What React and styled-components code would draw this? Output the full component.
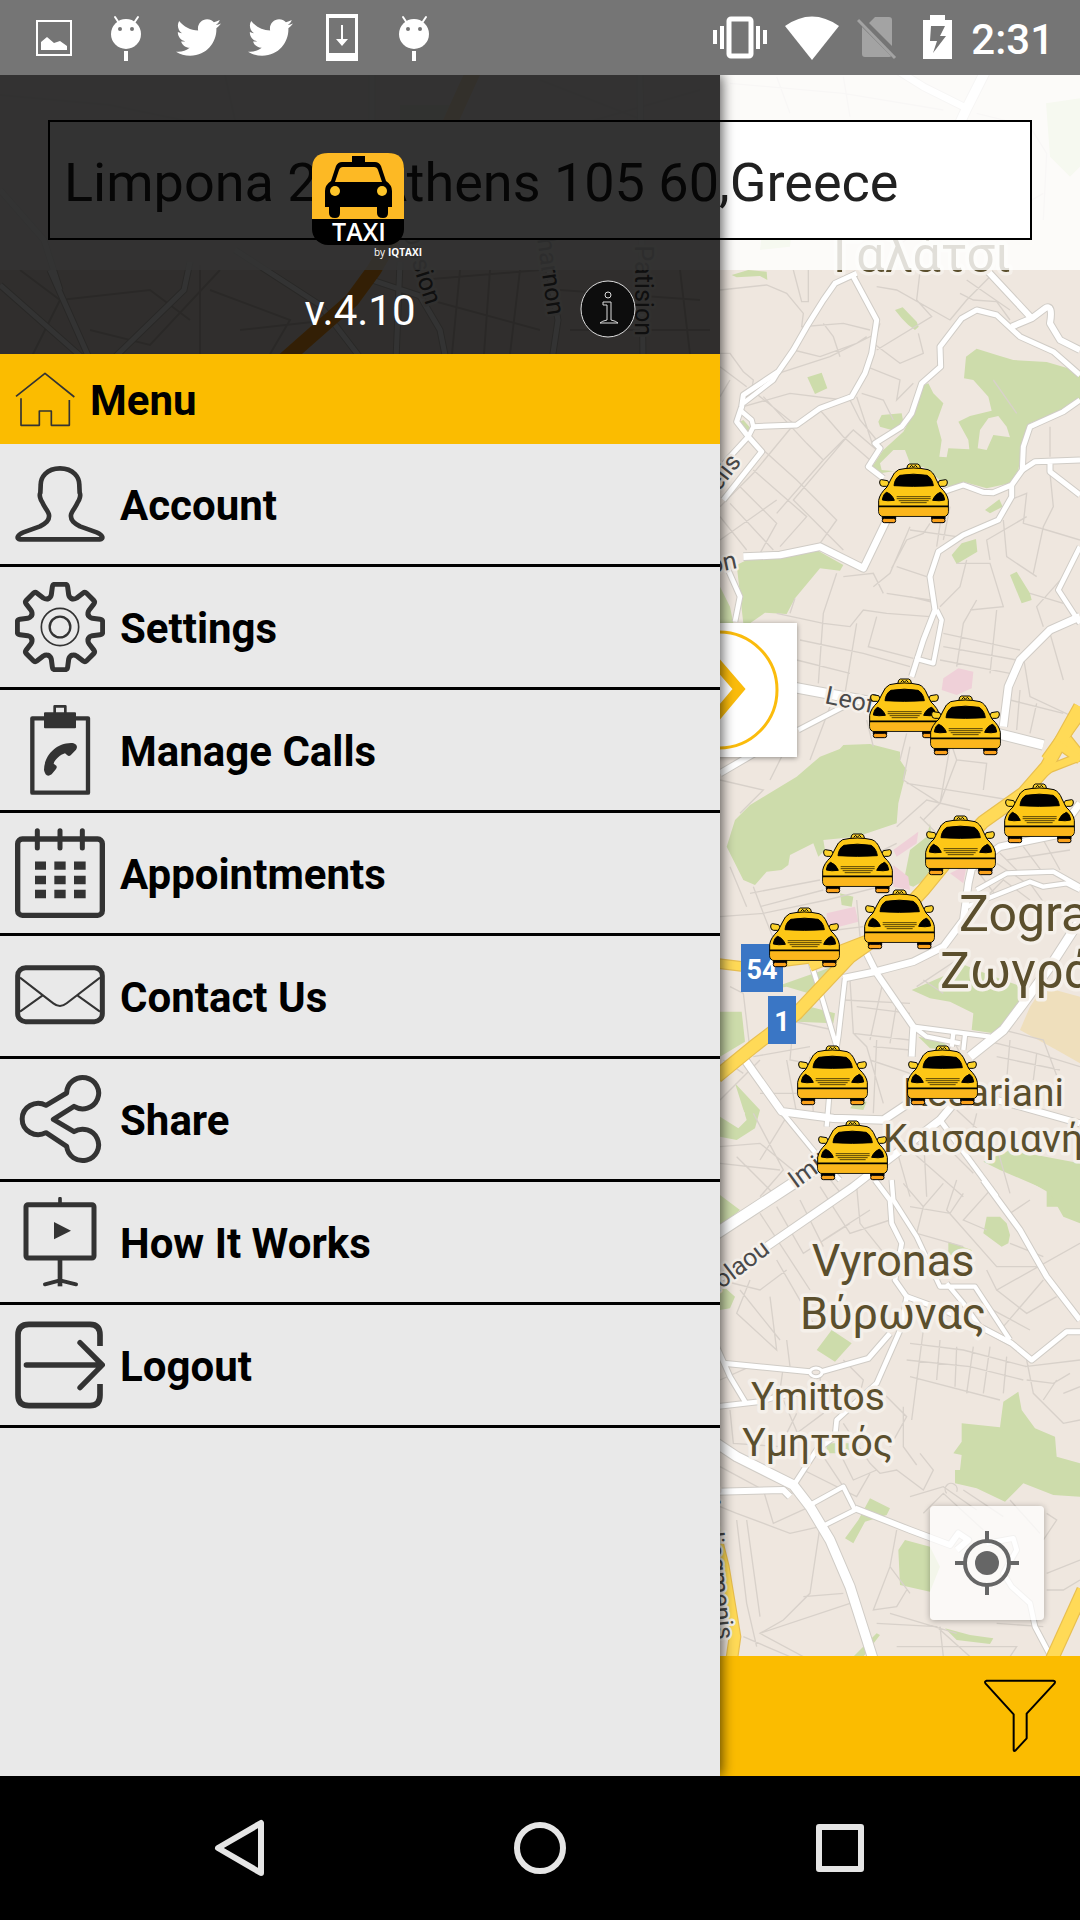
import { useState } from 'react';
import styled, { createGlobalStyle } from 'styled-components';
import { FaTwitter } from 'react-icons/fa';

const GlobalStyle = createGlobalStyle`
    * {
        box-sizing: border-box;
    }

    body {
        margin: 0;
        background: #000;
        font-family: Roboto, "Liberation Sans", sans-serif;
    }
`;

const Screen = styled.div`
    min-height: 100vh;
    display: flex;
    flex-direction: column;
`;

const StatusBar = styled.header`
    height: 75px;
    display: flex;
    align-items: center;
    justify-content: space-between;
    padding: 0 26px 0 18px;
    background: #757575;
    color: white;
`;

const Notifications = styled.div`
    display: flex;
    align-items: center;
`;

const Slot = styled.span`
    width: 72px;
    height: 75px;
    display: flex;
    align-items: center;
    justify-content: center;
`;

const SystemIcons = styled.div`
    display: flex;
    align-items: center;
    gap: 18px;
`;

const Clock = styled.time`
    font-size: 42px;
    font-weight: 500;
    line-height: 48px;
    padding-top: 4px;
`;

/* The drawer takes two thirds of the row, the map runs under all of it */
const Main = styled.main`
    flex: 1;
    display: grid;
    grid-template-columns: 2fr 1fr;
    overflow: hidden;
`;

const MapScreen = styled.section`
    grid-area: 1 / 1 / 2 / 3;
    display: flex;
    flex-direction: column;
`;

const MapArea = styled.div`
    position: relative;
    flex: 1;
    display: flex;
    flex-direction: column;
    justify-content: space-between;
    background: #efe7df;
`;

const MapDrawing = styled.svg`
    position: absolute;
    inset: 0;
    width: 100%;
    height: 100%;
`;

const SearchPanel = styled.div`
    position: relative;
    padding: 45px 48px 30px;
    background: rgba(255, 255, 255, 0.82);
`;

const AddressInput = styled.input`
    display: block;
    width: 100%;
    height: 120px;
    padding: 4px 14px 0;
    border: 2px solid black;
    border-radius: 0;
    background: white;
    color: #212121;
    font-family: inherit;
    font-size: 54px;
    outline: none;
`;

const LocateButton = styled.button`
    position: relative;
    align-self: flex-end;
    width: 114px;
    height: 114px;
    margin: 36px;
    padding: 0;
    border: none;
    border-radius: 4px;
    background: rgba(255, 255, 255, 0.75);
    box-shadow: 0 1px 6px rgba(0, 0, 0, 0.3);
`;

const BottomBar = styled.footer`
    height: 120px;
    display: flex;
    align-items: center;
    justify-content: flex-end;
    padding: 0 24px;
    background: #fbbc00;
`;

const IconButton = styled.button`
    display: flex;
    padding: 0;
    border: none;
    background: none;
`;

const ExpandButton = styled.button`
    grid-area: 1 / 1;
    justify-self: end;
    z-index: 1;
    width: 156px;
    height: 134px;
    margin: 548px -77px 0 0;
    padding: 0;
    border: none;
    background: white;
    box-shadow: 0 1px 5px rgba(0, 0, 0, 0.4);
`;

const Drawer = styled.aside`
    grid-area: 1 / 1;
    z-index: 2;
    display: flex;
    flex-direction: column;
    box-shadow: 2px 0 12px rgba(0, 0, 0, 0.65);
`;

const DrawerHeader = styled.div`
    min-height: 279px;
    display: flex;
    flex-direction: column;
    align-items: center;
    padding-top: 78px;
    background: rgba(0, 0, 0, 0.8);
`;

const VersionRow = styled.div`
    flex: 1;
    width: 100%;
    display: grid;
    grid-template-columns: 1fr auto 1fr;
    align-items: center;
    padding-top: 2px;
`;

const Version = styled.span`
    grid-column: 2;
    padding-top: 4px;
    color: white;
    font-size: 42px;
    line-height: 48px;
`;

const InfoButton = styled(IconButton)`
    justify-self: end;
    margin-right: 84px;
`;

const MenuTitle = styled.h1`
    height: 90px;
    display: flex;
    align-items: center;
    gap: 15px;
    margin: 0;
    padding: 0 15px;
    background: #fbbc00;
    color: black;
    font-size: 42px;
    font-weight: 700;
`;

const MenuList = styled.ul`
    flex: 1;
    margin: 0;
    padding: 0;
    list-style: none;
    background: #e9e9e9;
`;

const MenuLink = styled.a`
    height: 123px;
    display: flex;
    align-items: center;
    gap: 15px;
    padding: 0 15px;
    border-bottom: 3px solid black;
    color: black;
    font-size: 42px;
    font-weight: 700;
    text-decoration: none;
`;

const MenuLabel = styled.span`
    padding-top: 2px;
`;

const LineIcon = styled.svg`
    flex: none;
    width: ${({ $size }) => $size}px;
    height: ${({ $size }) => $size}px;
    fill: none;
    stroke: #333;
    stroke-linejoin: round;
`;

const NavBar = styled.nav`
    height: 144px;
    display: grid;
    grid-template-columns: repeat(3, 1fr);
    justify-items: center;
    align-items: center;
    padding: 0 90px;
    background: black;
`;

const PlaceLabel = styled.text`
    font-size: ${({ $size }) => $size}px;
    text-anchor: ${({ $anchor }) => $anchor || 'start'};
    fill: #5b4f2d;
    stroke: #f5f0ea;
    stroke-width: 7px;
    stroke-linejoin: round;
    paint-order: stroke;
`;

const RoadLabel = styled.text`
    font-size: 25px;
    text-anchor: ${({ $anchor }) => $anchor || 'start'};
    fill: #4a4a4a;
    stroke: #f5f0ea;
    stroke-width: 5px;
    stroke-linejoin: round;
    paint-order: stroke;
`;

const ShieldText = styled.text`
    font-size: 27px;
    font-weight: 700;
    text-anchor: middle;
    fill: white;
`;

const LogoText = styled.text`
    font-family: "Open Sans", "Noto Sans", sans-serif;
    font-size: ${({ $size }) => $size}px;
    font-weight: ${({ $weight }) => $weight || 400};
    fill: white;
`;

/* ---------- map data ---------- */

// Each tile is drawn at three units per pixel, from its own top left corner
const tiles = [
    {
        x: 710,
        y: 240,
        parks: [
            'M768 350 L800 326 L860 345 L910 360 L1010 366 L1110 395 V480 L1060 510 L960 550 L940 600 L925 690 L900 730 L830 745 L760 725 L720 745 L640 680 L510 700 L480 690 L520 630 L580 575 L610 520 L630 440 L655 430 L670 460 L700 490 L680 545 L695 600 L688 650 L710 652 L715 625 L778 628 L775 600 L745 545 L780 528 L845 512 L835 470 L790 420 L762 415Z',
            'M505 545 L515 525 L575 520 L580 545 L545 570 L510 560Z',
            'M555 210 L578 202 L620 245 L626 260 L615 270 L595 255 L575 235Z',
            'M292 412 L335 398 L352 445 L315 462Z',
            'M80 975 L130 950 L290 935 L320 930 L400 975 L390 992 L330 985 L255 1075 L230 1122 L165 1118 L120 1150 H100Z',
            'M30 1040 L60 1100 L70 1150 H30Z',
            'M725 945 L755 910 L798 897 L802 935 L740 972Z',
            'M900 1005 L920 995 L960 1060 L965 1080 L935 1090Z',
            'M825 810 L868 778 L878 800 L840 820Z',
            'M65 105 L115 90 L170 95 L172 120 L150 108 L80 112Z',
            'M360 1560 L400 1515 L480 1512 L570 1535 V1580Z',
            'M80 550 L100 540 L122 565 L105 580Z',
            'M1008 -410 L1110 -425 V-220 L1080 -190 L1020 -250Z',
            'M150 30 L160 -60 L250 -75 L240 20Z',
        ],
        land: [
            'M803 625 L810 570 L835 535 L865 528 L890 560 L900 592 L850 585 L830 630Z',
            'M515 690 L510 670 L550 630 L585 630 L600 670 L620 700Z',
        ],
        pink: ['M700 1315 L745 1285 L790 1295 L785 1345 L740 1365 L695 1350Z'],
        sand: [],
        lanes: [
            'M30 150 L170 135 L230 160 L280 220 L275 260 L400 250 L480 270 M250 90 L275 185 L295 185 V90',
            'M30 340 H60 L100 395 L130 420 L125 450 M30 380 L110 440 M30 470 L60 420',
            'M250 330 L330 350 L440 310 L470 290 M205 400 L360 350 L490 285',
            'M340 250 L370 290 L390 350 M500 140 L560 150 L720 240 M630 95 L620 180 L665 230 L500 330',
            'M720 240 L770 180 L850 100 M750 160 L790 180 L860 185 L900 240 M770 120 L900 210',
            'M490 310 L570 370 L640 340 L625 280 M510 250 L470 380 L570 420 L560 480 L610 430',
            'M100 500 L240 460 L400 480 M125 450 L250 550 M160 470 L290 610 L340 660 L430 570 L500 630',
            'M250 555 L130 700 L30 800 M330 510 L400 590 L480 660 M420 480 L450 540 L500 600',
            'M160 630 L260 720 L380 840 L330 910 M130 690 L290 830 L210 920 M90 740 L200 850 L150 940',
            'M60 790 L190 930 M30 830 L110 930 M340 660 L200 820 M420 580 L250 780 L400 930',
            'M455 460 L520 480 L550 540 M440 470 L470 560 L490 620 M30 900 L200 780',
            'M200 1120 L340 1150 L420 1160 L460 1110 L530 1120 L660 1130 M255 1075 L240 1120',
            'M380 1000 L340 1120 L325 1330 M440 1150 L405 1360 M500 1130 L475 1220 L610 1255',
            'M270 1200 L460 1240 L600 1280 M260 1260 L420 1300 M400 1010 L490 1000 L520 1060',
            'M545 985 L590 900 L640 880 L660 850 M600 860 L540 1000 L490 1040 M700 790 L680 920 M720 800 L700 900',
            'M600 870 L740 890 M560 980 L650 1010 M600 1070 L680 1090 M530 1060 L660 1080',
            'M740 970 L840 970 L880 1100 L780 1110 M840 960 L830 900 L950 830 M880 840 L890 950 L980 1010',
            'M900 780 L950 760 L940 850 L1010 870 L1110 900 M1020 700 L1030 800 L1000 860 L970 1000',
            'M770 960 L750 1040 L690 1100 M800 1080 L760 1150 L740 1280 M860 1110 L840 1300',
            'M700 1180 L930 1230 M700 1220 L920 1260 M690 1260 L900 1300 M960 1060 L1060 1090',
            'M940 1250 L960 1370 L1110 1440 M1020 1180 L1060 1320 M1000 1160 L980 1100 L1060 1010',
            'M900 1380 L1060 1420 M930 1350 L920 1470 M980 1390 L960 1480 M360 1400 L300 1560',
            'M470 1440 L500 1560 M590 1480 L570 1560 M850 420 L920 520 M1020 560 L1020 650',
            'M560 20 L640 -40 L650 -160 M300 -20 L420 -60 L500 -150 L700 -100 M860 -60 L1000 -140',
            'M60 -470 L400 -440 L700 -390 M800 -380 L960 -340 L1010 -260 L1000 -60 M200 -490 L240 -380 M400 -490 L420 -370',
        ],
        streets: [
            [15, 'M440 100 L375 130 L340 180 L290 260 L250 330 L205 395 L100 465 L95 500 L80 545 L115 590 L155 635 L40 780'],
            [13, 'M205 395 L190 420 L100 490 M90 510 L125 540 L130 560 L115 590'],
            [15, 'M430 110 L500 240 L485 340 L465 400 L425 470 L330 505 L260 555 L130 560'],
            [14, 'M115 590 L60 650 L20 700'],
            [18, 'M830 90 L965 235 L905 260 M965 235 L1005 205 Q1030 190 1020 250 L1050 300 L1110 330'],
            [15, 'M1110 405 L1030 335 L930 290 L860 225 L800 210 L755 235 L690 320 L692 380 L635 430 L605 520 L575 560 L495 610 L510 625 L475 680 L520 715'],
            [15, 'M1110 480 L1060 515 L960 560 L940 620 L937 690 L905 735 L850 758 L820 757 L760 735 L700 755'],
            [15, 'M937 690 L975 665 L1110 660 M1020 665 V695 L1110 765'],
            [15, 'M905 735 L905 770 L865 840 L760 885 L685 935 L660 1010 L675 1110 L640 1200 L605 1310'],
            [13, 'M680 1110 L695 1140 L670 1270 L615 1255'],
            [20, 'M530 840 L460 985 L330 920 L210 945 L100 950'],
            [14, 'M50 980 L90 1070 L75 1145'],
            [14, 'M1110 920 L1045 1050 L1110 1150'],
            [22, 'M1110 1130 L1020 1170 L930 1260 L895 1340 L880 1460'],
            [28, 'M240 1340 L480 1385 L700 1440 L1000 1515'],
            [14, 'M400 1400 L265 1470'],
            [20, 'M560 -510 L640 -460 L770 -395'],
            [28, 'M828 -510 L770 -395 L740 -330'],
        ],
        highways: [[36, 'M1110 1420 L1060 1490 L1010 1560 M1110 1550 L1070 1500']],
    },
    {
        x: 710,
        y: 740,
        parks: [
            'M50 320 L75 240 L120 195 L260 110 L330 50 L420 15 L500 20 L560 45 L590 90 L565 190 L560 250 L440 290 L340 300 L345 330 L325 350 L310 310 L240 345 L235 375 L215 390 L170 395 L135 435 L100 420Z',
            'M600 330 L650 290 L660 250 L680 400 L610 440 L580 430Z',
            'M390 460 L430 470 L425 500 L395 495Z',
            'M170 750 L340 690 L440 645 L370 730 L330 770 L230 740Z',
            'M260 845 L300 800 L375 820 L370 850Z',
            'M605 750 L720 700 L740 665 L800 690 L880 720 L950 745 L900 840 L850 880 L785 870 L790 820 L720 785 L660 775Z',
            'M30 815 L95 815 L105 905 L30 950Z',
            'M75 1030 L150 1110 L135 1165 L80 1200 L30 1190 V1130 L85 1165 L110 1140Z',
            'M820 1265 L900 1230 L1110 1270 V1400 L1010 1400 L1010 1350 L870 1290Z',
            'M625 890 L700 905 L720 930 L660 925Z',
            'M440 1080 L470 1085 L460 1110 L420 1105Z',
        ],
        land: ['M75 1070 L105 1120 L85 1160 L60 1130Z'],
        pink: [
            'M550 330 L625 275 L620 310 L560 350Z',
            'M350 520 L435 500 L445 545 L350 570Z',
            'M550 375 L595 410 L600 450 L550 440Z',
            'M720 400 L770 375 L760 430Z',
        ],
        sand: ['M960 800 L1000 740 L1110 770 V970 L1040 930 L930 870Z'],
        lanes: [
            'M30 120 L160 150 L90 220 M230 20 L180 120 M600 20 L580 120 L690 190 L720 20 M590 130 L780 160 L900 180',
            'M700 -60 L740 60 L830 70 L820 150 M740 60 L690 190 L640 240 M560 260 L650 180 L780 210',
            'M120 460 L330 420 M150 500 L340 450 M130 440 L160 520 L350 480 L550 430 M30 530 L160 520 L200 620',
            'M60 380 L110 500 M560 310 L480 350 M630 230 L700 300 M440 480 L450 590 M380 570 L460 560',
            'M60 740 L100 760 M100 760 L120 930 M420 720 L430 880 L600 900 M440 800 L600 820 M400 780 L600 790',
            'M520 720 L480 900 M560 790 L540 910 M230 840 L370 870 M250 850 L240 960 L350 980 M130 950 L300 920',
            'M30 1080 L150 960 M150 1060 L350 1060 M100 1000 L40 960 M230 960 L260 1120 M300 950 L310 1120',
            'M490 920 L600 930 M480 960 L600 1000 M500 900 L490 1120 M430 880 L470 920 L520 1090',
            'M720 880 L760 960 M740 870 L710 950 M640 720 L700 760 M620 740 L740 660',
            'M820 900 L980 940 L1110 980 M860 950 L1050 990 M900 900 L890 1020 M980 940 L970 1020',
            'M880 870 L1000 900 L1060 1060 M30 1270 L210 1290 M30 1220 L150 1210 L260 1300 M130 1120 L220 1290 L150 1370',
            'M230 1130 L150 1260 M80 1250 L200 1370 M300 1240 L400 1370 M540 1160 L600 1370 M600 1230 L760 1370',
            'M560 1200 L720 1230 L790 1300 M640 1180 L650 1370 M740 1110 L860 1220 L900 1360 M800 1120 L780 1200',
            'M800 390 L860 470 M860 370 L950 430 M870 340 L930 400 M940 320 L1000 400 M1000 300 L1050 390 M890 360 L1080 330',
            'M830 470 L880 420 L960 480 M960 430 L1010 500',
        ],
        streets: [
            [13, 'M300 660 L335 770 L380 920 M405 715 L385 890 L360 1040 L350 1160'],
            [20, 'M400 715 L495 695 L610 665 L700 620 L760 540 L775 430 L785 385 L870 320 L1040 285 L1110 190'],
            [13, 'M800 450 L890 400 L1030 395 L1110 440 M770 500 L960 425 L1000 440 L1070 430 L1110 450'],
            [18, 'M470 640 L500 700 L610 860 L605 950'],
            [13, 'M610 860 L840 890 M610 860 L650 890 L750 910 M730 880 L725 920 M765 885 L760 930'],
            [26, 'M1110 540 L1020 680 L940 790 L880 870 L780 950'],
            [22, 'M105 960 L215 1115 L370 1135 L520 1140 L610 1080'],
            [13, 'M215 1115 L350 1280 L390 1320'],
            [32, 'M20 1480 L250 1330 L400 1230'],
            [22, 'M20 1620 L170 1520 L430 1340 L520 1270 L690 1140 L740 1080'],
            [14, 'M690 1140 L860 1370'],
            [18, 'M860 1080 L1110 1150'],
            [18, 'M30 100 L150 30'],
        ],
        highways: [
            [30, 'M20 670 L100 680 L340 650 L470 600'],
            [30, 'M300 680 L400 640 L470 620'],
            [40, 'M1110 -100 L1010 80 L940 160 L820 245 L730 340 L640 450 L520 580 L420 650 L260 820 L130 920 L20 1010'],
            [26, 'M1110 50 L1020 85 L960 130 M1040 10 L1110 60'],
        ],
    },
    {
        x: 710,
        y: 1180,
        parks: [
            'M880 665 L925 635 L935 690 L975 745 L1035 770 L1040 830 L1110 850 V950 L1030 945 L940 910 L885 965 L800 925 L735 910 V870 H750 L755 825 L730 820 L755 785 V730 L870 742Z',
            'M830 110 L870 110 L890 130 L900 165 L895 190 L875 200 L820 160Z',
            'M320 510 L365 450 L425 490 L375 545Z',
            'M585 1080 L660 1100 L690 1160 L660 1235 L570 1215 L565 1110Z',
            'M480 955 L540 985 L530 1005 L465 1025 L430 1090 L405 1075 L445 1020Z',
            'M30 45 L90 90 L30 140Z',
            'M30 310 L75 350 L60 385 L30 390Z',
            'M715 185 L785 210 L780 235 L715 225Z',
            'M705 1345 L780 1365 L850 1375 L840 1392 L740 1380Z',
            'M950 0 H1110 V130 L1060 110 L1020 40Z',
            'M350 790 H420 V820 H350Z',
            'M500 1360 L510 1365 L460 1430 H430Z',
        ],
        land: [],
        pink: [],
        sand: [],
        lanes: [
            'M30 300 L150 330 L230 270 M90 330 L210 480 M120 300 L80 400 L200 510 L180 350 M200 240 L310 430',
            'M200 80 L280 220 L420 130 M150 100 L300 330 M270 60 L340 200 M330 20 L420 160 L540 120 M340 180 L480 90',
            'M440 20 L450 130 L530 230 M580 10 L640 80 L700 10 M600 80 L720 100 L760 40 M640 80 L620 160 L760 200',
            'M740 0 L710 90 L860 260 L980 260 M850 20 L760 120 L830 150 M900 190 L1000 230 M830 270 L860 330 L1110 190',
            'M900 100 L960 60 M860 330 L950 400 L1040 350 M830 380 L960 450 M1000 300 L880 440',
            'M600 490 L760 510 L950 560 M590 540 L780 560 L940 600 M600 590 L870 660 M640 450 L605 720 M690 480 L680 600',
            'M740 500 L735 620 M790 500 L770 640 M840 500 L820 640 M890 530 L880 640 M950 540 L970 640 L1060 730 L1110 720',
            'M945 560 L1110 540 M950 600 L1030 610 L1080 580 M1000 660 L1040 600 M1060 640 L1110 620',
            'M230 480 L240 560 M400 540 L460 600 L440 680 M220 560 L210 630 M330 590 L340 700 L260 760 M30 600 L120 560',
            'M60 690 L70 790 L210 800 L260 700 M220 660 L280 800 M400 730 L480 850 L510 880 L560 870 L640 930 L670 870 L630 820 M580 680 V800 L620 855',
            'M340 830 L400 920 M380 800 L430 900 L500 870 M280 870 L440 950 L480 880 M520 640 L590 710 L540 800',
            'M30 980 L80 1000 L240 1060 L330 1040 L300 1240 L220 1320 L150 1360 L280 1430 M80 1020 L110 1270 L140 1400 M110 1020 L150 1310',
            'M30 860 L160 930 L190 1030 L300 980 M280 1250 L400 1240 M100 1370 L240 1430 M150 1360 L420 1270',
            'M560 1050 L540 1160 L490 1290 L560 1280 L590 1230 M540 1160 L600 1240 M500 1330 L680 1340 L780 1430 M540 1300 L740 1360',
            'M600 950 L700 920 L800 990 M640 1000 L700 940 L820 1050 M710 940 A18 18 0 1 1 740 935 M760 930 L880 1010',
            'M1010 1180 L1110 1140 M1010 1230 L1060 1230 L1110 1200 M860 1330 L1000 1340 M560 1400 L920 1400 L900 1430 M690 1340 L700 1430',
            'M1010 1000 L1040 1020 L1000 1080 M900 960 L990 1060',
        ],
        streets: [
            [14, 'M495 0 L540 60 L545 130 L575 190 L555 300 L590 350 L575 440 L500 610 L380 720 L375 770 L320 810 L255 910'],
            [13, 'M545 0 L550 60 L620 170 L690 320 L795 320 L900 480 M710 310 L760 370 L810 440 L905 490'],
            [15, 'M590 350 L700 390 L810 440 L905 490 L965 540 L1070 455 L1110 455'],
            [16, 'M820 0 L930 150 L1010 290 L1110 420'],
            [15, 'M40 550 L300 575 M335 575 L475 535 L540 460'],
            [9, 'M300 577 A18 13 0 1 0 336 577 A18 13 0 1 0 300 577'],
            [14, 'M20 500 L60 590 L105 665 M20 680 L150 665 L200 650 L260 640'],
            [28, 'M20 790 L80 830 L180 880 L250 915 L300 980 L360 1080 L420 1220 L490 1440'],
            [18, 'M20 935 L220 930 L240 950'],
            [13, 'M300 975 L400 920 L435 990 L335 1040'],
            [17, 'M435 985 L600 1050 L720 1095 L745 1060 L775 1080 L740 1110'],
            [14, 'M830 1090 L910 1075 L920 1110 L880 1180 L905 1220 L960 1270 L975 1340 L1020 1425'],
        ],
        highways: [
            [36, 'M10 1040 L40 1160 L75 1370 L65 1440'],
            [40, 'M1120 1230 L1020 1450'],
        ],
    },
];

// Streets west of the drawer edge, in plain pixels
const westStreets = [
    'M50 270 L90 360',
    'M0 285 L85 360',
    'M190 262 L184 290 L112 360',
    'M235 250 L320 305 L362 360',
    'M372 280 L420 296 L440 330 L446 360',
    'M400 262 L396 360',
    'M372 75 V130',
    'M545 250 L558 320 L552 360',
    'M640 75 L643 360',
    'M0 190 L44 240 L60 290',
];

const westLanes = [
    'M0 95 L110 105 L230 130 M225 75 L235 120 L260 140',
    'M60 300 L150 290 L190 320 M20 270 L60 300 L30 360 M90 330 L150 345 L220 270',
    'M200 265 V354 M210 290 L290 320 L270 354 M240 330 L330 320 M420 280 L540 270 M430 300 L540 330',
    'M460 270 L452 354 M490 270 L484 354 M520 270 L510 354 M560 290 L700 300 M570 330 L710 330 M680 270 L690 354',
    'M540 80 L720 150 M560 130 L700 90',
];

const taxis = [
    [878, 463],
    [869, 678],
    [930, 695],
    [1004, 783],
    [925, 815],
    [822, 833],
    [864, 889],
    [769, 907],
    [797, 1045],
    [907, 1045],
    [817, 1120],
];

const Tile = ({ tile, children }) => (
    <g transform={`translate(${tile.x} ${tile.y}) scale(${1 / 3})`}>{children}</g>
);

const TaxiShape = () => (
    <g id="taxi" stroke="#000" strokeWidth="3" strokeLinejoin="round">
        <rect x="13" y="158" width="40" height="10" fill="#000" />
        <rect x="161" y="158" width="40" height="10" fill="#000" />
        <rect x="13" y="166" width="40" height="13" rx="6" fill="#f9a01b" />
        <rect x="161" y="166" width="40" height="13" rx="6" fill="#f9a01b" />
        <path d="M86 18 Q88 3 94 3 H119 Q126 3 128 18Z" fill="#fcd22a" />
        <path d="M29 53 L10 50 Q4 50 5 60 Q6 70 14 70 L26 70 L34 62Z" fill="#fcd22a" />
        <path d="M184 53 L203 50 Q209 50 208 60 Q207 70 199 70 L187 70 L179 62Z" fill="#fcd22a" />
        <path
            d="M62 20 Q106 10 150 20 Q166 26 174 48 L186 72 Q208 92 211 112 V146 Q210 160 198 160 H15 Q3 160 2 146 V112 Q5 92 27 72 L39 48 Q48 26 62 20Z"
            fill="#fdc716"
        />
        <path d="M4 134 H209 V146 Q208 158 198 158 H15 Q5 158 4 146Z" fill="#fbb61c" stroke="none" />
        <path d="M48 68 Q50 46 66 37 Q106 30 147 37 Q163 46 166 68 Q106 72 48 68Z" fill="#000" />
        <path d="M13 111 Q16 92 26 88 Q42 94 49 112 Q28 115 13 111Z" fill="#000" />
        <path d="M200 111 Q197 92 187 88 Q171 94 164 112 Q185 115 200 111Z" fill="#000" />
        <path d="M56 101 H158 M56 107 H158 M62 113 H152 M68 119 H146" fill="none" strokeWidth="2" />
        <path d="M2 130 H211" strokeWidth="5" />
        <path d="M95 13 L101 7 L106 13 L112 7 L118 13" fill="none" />
    </g>
);

const CityMap = () => (
    <MapDrawing viewBox="0 75 1080 1581" preserveAspectRatio="xMinYMin slice" aria-label="Map of Athens">
        <defs>
            <TaxiShape />
        </defs>

        {tiles.map((tile) => (
            <Tile key={tile.y} tile={tile}>
                <path d={tile.parks.join(' ')} fill="#cddcab" />
                <path d={tile.land.join(' ') || 'M0 0'} fill="#efe7df" />
                <path d={tile.pink.join(' ') || 'M0 0'} fill="#efd0d8" />
                <path d={tile.sand.join(' ') || 'M0 0'} fill="#efdfbc" />
                <path d={tile.lanes.join(' ')} fill="none" stroke="#d8d1ca" strokeWidth="4" />
            </Tile>
        ))}

        <path d="M400 105 H460 V120 H400Z" fill="#cddcab" />
        <path d={westLanes.join(' ')} fill="none" stroke="#cfc8c2" strokeWidth="2" />
        <path d={westStreets.join(' ')} fill="none" stroke="#c9c4be" strokeWidth="7" />
        <path d={westStreets.join(' ')} fill="none" stroke="#fff" strokeWidth="5" />
        <path d="M474 70 L458 105 L420 190 L374 270 L352 300 L284 360" fill="none" stroke="#ff9c1c" strokeWidth="15" />

        {/* casings first, so that crossings stay open */}
        {tiles.map((tile) => (
            <Tile key={tile.y} tile={tile}>
                {tile.streets.map(([width, d]) => (
                    <path key={d} d={d} fill="none" stroke="#d0ccc6" strokeWidth={width + 6} strokeLinejoin="round" />
                ))}
            </Tile>
        ))}
        {tiles.map((tile) => (
            <Tile key={tile.y} tile={tile}>
                {tile.streets.map(([width, d]) => (
                    <path key={d} d={d} fill="none" stroke="#fff" strokeWidth={width} strokeLinejoin="round" />
                ))}
            </Tile>
        ))}
        {tiles.map((tile) => (
            <Tile key={tile.y} tile={tile}>
                {tile.highways.map(([width, d]) => (
                    <path key={d} d={d} fill="none" stroke="#e8bf50" strokeWidth={width + 2} strokeLinejoin="round" />
                ))}
            </Tile>
        ))}
        {tiles.map((tile) => (
            <Tile key={tile.y} tile={tile}>
                {tile.highways.map(([width, d]) => (
                    <path key={d} d={d} fill="none" stroke="#ffda57" strokeWidth={width - 5} strokeLinejoin="round" />
                ))}
            </Tile>
        ))}

        <RoadLabel transform="translate(402 232) rotate(72)">Dosion</RoadLabel>
        <RoadLabel $anchor="end" transform="translate(548 316) rotate(82)">Acharnon</RoadLabel>
        <RoadLabel $anchor="end" transform="translate(635 336) rotate(90)">Patision</RoadLabel>
        <RoadLabel $anchor="end" transform="translate(742 462) rotate(-52)">Kypselis</RoadLabel>
        <RoadLabel $anchor="end" transform="translate(738 568) rotate(-12)">Evelpidon</RoadLabel>
        <RoadLabel transform="translate(824 703) rotate(12)">Leof.</RoadLabel>
        <RoadLabel transform="translate(796 1189) rotate(-36)">Imittou</RoadLabel>
        <RoadLabel $anchor="end" transform="translate(771 1252) rotate(-37)">Filolaou</RoadLabel>
        <RoadLabel $anchor="end" transform="translate(717 1640) rotate(84)">Vouliagmenis</RoadLabel>

        <PlaceLabel $size={50} $anchor="middle" x="922" y="272">Γαλάτσι</PlaceLabel>
        <PlaceLabel $size={50} x="959" y="931">Zogra</PlaceLabel>
        <PlaceLabel $size={50} x="940" y="988">Ζωγρά</PlaceLabel>
        <PlaceLabel $size={39} x="903" y="1106">Kesariani</PlaceLabel>
        <PlaceLabel $size={39} x="883" y="1152">Καισαριανή</PlaceLabel>
        <PlaceLabel $size={45} $anchor="middle" x="893" y="1276">Vyronas</PlaceLabel>
        <PlaceLabel $size={45} $anchor="middle" x="893" y="1329">Βύρωνας</PlaceLabel>
        <PlaceLabel $size={39} $anchor="middle" x="818" y="1410">Ymittos</PlaceLabel>
        <PlaceLabel $size={39} $anchor="middle" x="818" y="1456">Υμηττός</PlaceLabel>

        <rect x="741" y="944" width="42" height="48" fill="#3a76c5" />
        <ShieldText x="762" y="979">54</ShieldText>
        <rect x="768" y="996" width="28" height="48" fill="#3a76c5" />
        <ShieldText x="782" y="1031">1</ShieldText>

        {taxis.map(([x, y]) => (
            <use key={`${x}-${y}`} href="#taxi" transform={`translate(${x} ${y}) scale(${1 / 3})`} />
        ))}
    </MapDrawing>
);

/* ---------- icons ---------- */

const AndroidIcon = () => (
    <svg width="72" height="75" viewBox="0 0 72 75">
        <path d="M25 17 L29 23 M48 17 L44 23" stroke="#fff" strokeWidth="2" strokeLinecap="round" />
        <circle cx="36" cy="34" r="15" fill="#fff" />
        <circle cx="30" cy="29" r="2" fill="#757575" />
        <circle cx="42" cy="29" r="2" fill="#757575" />
        <rect x="34" y="51" width="4" height="10" fill="#fff" />
    </svg>
);

const PictureIcon = () => (
    <svg width="72" height="75" viewBox="0 0 72 75">
        <rect x="19" y="21" width="34" height="34" fill="none" stroke="#fff" strokeWidth="2" />
        <path d="M23 50 V42 L29 37 L36 43 L42 41 L49 46 V50Z" fill="#fff" />
    </svg>
);

const DownloadIcon = () => (
    <svg width="72" height="75" viewBox="0 0 72 75">
        <path d="M20 14 H52 V61 H20Z M23 18 V53 H49 V18Z" fill="#fff" fillRule="evenodd" />
        <path d="M35 25 H37 V39 H42 L36 46 L30 39 H35Z" fill="#fff" />
    </svg>
);

const VibrateIcon = () => (
    <svg width="54" height="45" viewBox="0 0 54 45">
        <rect x="16" y="4" width="22" height="37" rx="2" fill="none" stroke="#fff" strokeWidth="5" />
        <path d="M0 15 H4 V29 H0Z M7 11 H11 V34 H7Z M43 11 H47 V34 H43Z M50 15 H54 V29 H50Z" fill="#fff" />
    </svg>
);

const WifiIcon = () => (
    <svg width="54" height="44" viewBox="0 0 54 44">
        <path d="M0 10 Q27 -9 54 10 L27 44Z" fill="#fff" />
    </svg>
);

const NoSimIcon = () => (
    <svg width="48" height="45" viewBox="0 0 48 45">
        <path d="M12 8 L18 2 H32 Q35 2 35 5 V31Z M5 12 L34 41 Q34 42 32 42 H8 Q5 42 5 39Z" fill="#a3a3a3" />
        <path d="M1 5 L38 43" stroke="#a3a3a3" strokeWidth="3" />
    </svg>
);

const BatteryIcon = () => (
    <svg width="30" height="45" viewBox="0 0 30 45">
        <path d="M7 0 H22 V5 H29 V44 H0 V5 H7Z M8 11 L7 26 H14 L10 38 L23 21 H17 L22 11Z" fill="#fff" fillRule="evenodd" />
    </svg>
);

const Logo = () => (
    <svg width="150" height="108" viewBox="0 0 150 108" role="img" aria-label="Taxi by IQTaxi">
        <rect x="27" y="0" width="92" height="92" rx="16" fill="#000" />
        <path d="M27 66 V16 Q27 0 43 0 H103 Q119 0 119 16 V66Z" fill="#fdb924" />
        <path
            d="M67 3 H80 V9 H90 Q94 9 96 13 L101 28 Q107 32 107 38 V54 H103 V60 Q103 65 98 65 Q92 65 92 60 V54 H55 V60 Q55 65 50 65 Q44 65 44 60 V54 H40 V38 Q40 32 46 28 L51 13 Q53 9 57 9 H67Z"
            fill="#000"
        />
        <path d="M58 14 H89 Q92 14 93 17 L97 29 H50 L54 17 Q55 14 58 14Z" fill="#fdb924" />
        <circle cx="50" cy="38" r="5" fill="#fdc52a" />
        <circle cx="97" cy="38" r="5" fill="#fdc52a" />
        <LogoText $size={25} $weight={600} x="74" y="88" textAnchor="middle">TAXI</LogoText>
        <LogoText $size={10} x="89" y="103">by</LogoText>
        <LogoText $size={10} $weight={700} x="103" y="103">IQTAXI</LogoText>
    </svg>
);

const gearAngles = [0, 45, 90, 135, 180, 225, 270, 315];

const menuItems = [
    {
        label: 'Account',
        icon: (
            <path
                strokeWidth="14"
                d="M135 28 C95 28 76 55 77 80 L76 102 C72 106 76 122 82 130 C88 145 101 158 102 168 C104 185 92 193 75 202 L25 220 C5 228 4 241 15 241 H255 C266 241 265 228 245 220 L195 202 C178 193 166 185 168 168 C169 158 182 145 188 130 C194 122 198 106 194 102 L193 80 C194 55 175 28 135 28Z"
            />
        ),
    },
    {
        label: 'Settings',
        icon: (
            <g transform="translate(135 135)">
                {gearAngles.map((angle) => (
                    <path
                        key={angle}
                        transform={`rotate(${angle})`}
                        strokeWidth="15"
                        strokeLinecap="round"
                        d="M-35 -85 Q-28 -88 -26 -97 L-23 -120 Q-22 -128 -15 -128 H15 Q22 -128 23 -120 L26 -97 Q28 -88 35 -85"
                    />
                ))}
                <circle r="56" strokeWidth="5" />
                <circle r="31" strokeWidth="7" />
            </g>
        ),
    },
    {
        label: 'Manage Calls',
        icon: (
            <>
                <rect x="52" y="40" width="167" height="223" strokeWidth="13" />
                <rect x="119" y="4" width="32" height="30" strokeWidth="8" />
                <rect x="90" y="25" width="90" height="42" strokeWidth="6" fill="#333" />
                <path
                    fill="#333"
                    stroke="none"
                    d="M87 195 C87 155 120 115 168 114 C184 114 190 124 183 134 L167 151 Q162 155 157 151 L150 145 C136 149 119 164 116 176 L124 182 Q127 187 123 192 L110 208 Q92 220 87 195Z"
                />
            </>
        ),
    },
    {
        label: 'Appointments',
        icon: (
            <>
                <rect x="8" y="33" width="254" height="229" rx="14" strokeWidth="16" />
                <path d="M67 8 V60 M135 8 V60 M202 8 V60" strokeWidth="15" strokeLinecap="round" />
                <path
                    d="M60 113 H93 M118 113 H152 M177 113 H212 M60 156 H93 M118 156 H152 M177 156 H212 M60 198 H93 M118 198 H152 M177 198 H212"
                    strokeWidth="25"
                />
            </>
        ),
    },
    {
        label: 'Contact Us',
        icon: (
            <>
                <rect x="8" y="50" width="254" height="162" rx="24" strokeWidth="15" />
                <path d="M15 80 L115 157 Q135 173 155 157 L255 80 M15 182 L83 133 M255 182 L187 133" strokeWidth="6" />
            </>
        ),
    },
    {
        label: 'Share',
        icon: (
            <path
                strokeWidth="15"
                d="M93 94 L155 57 A48 47 0 1 1 177 97 L115 136 L177 173 A48 47 0 1 1 155 217 L93 176 A48 47 0 1 1 93 94Z"
            />
        ),
    },
    {
        label: 'How It Works',
        icon: (
            <>
                <rect x="33" y="23" width="204" height="160" rx="6" strokeWidth="15" />
                <path d="M135 5 V20" strokeWidth="11" strokeLinecap="round" />
                <path d="M117 75 L168 101 L117 127Z" fill="#333" stroke="none" />
                <path d="M135 185 V268" strokeWidth="14" />
                <path d="M90 262 L135 250 L183 262" strokeWidth="12" strokeLinecap="round" />
            </>
        ),
    },
    {
        label: 'Logout',
        icon: (
            <>
                <path
                    strokeWidth="17"
                    d="M255 78 V45 Q255 13 225 13 H42 Q9 13 9 45 V225 Q9 257 42 257 H225 Q255 257 255 225 V192"
                />
                <path d="M34 135 H258 M195 68 L262 135 L195 203" strokeWidth="16" strokeLinecap="round" />
            </>
        ),
    },
];

const App = () => {
    const [address, setAddress] = useState('Limpona 21, Athens 105 60,Greece');

    return (
        <Screen>
            <GlobalStyle />
            <StatusBar>
                <Notifications>
                    <Slot><PictureIcon /></Slot>
                    <Slot><AndroidIcon /></Slot>
                    <Slot><FaTwitter size={45} /></Slot>
                    <Slot><FaTwitter size={45} /></Slot>
                    <Slot><DownloadIcon /></Slot>
                    <Slot><AndroidIcon /></Slot>
                </Notifications>
                <SystemIcons>
                    <VibrateIcon />
                    <WifiIcon />
                    <NoSimIcon />
                    <BatteryIcon />
                    <Clock>2:31</Clock>
                </SystemIcons>
            </StatusBar>

            <Main>
                <MapScreen>
                    <MapArea>
                        <CityMap />
                        <SearchPanel>
                            <AddressInput
                                type="text"
                                aria-label="Address"
                                value={address}
                                onChange={(e) => setAddress(e.target.value)}
                            />
                        </SearchPanel>
                        <LocateButton aria-label="My location">
                            <svg width="114" height="114" viewBox="0 0 114 114" fill="none" stroke="#666" strokeWidth="4">
                                <circle cx="57" cy="57" r="22" />
                                <circle cx="57" cy="57" r="12" fill="#666" stroke="none" />
                                <path d="M57 25 V35 M57 79 V89 M25 57 H35 M79 57 H89" />
                            </svg>
                        </LocateButton>
                    </MapArea>
                    <BottomBar>
                        <IconButton aria-label="Filter">
                            <svg width="72" height="74" viewBox="0 0 216 222" fill="none" stroke="#000" strokeWidth="6" strokeLinejoin="round">
                                <path d="M8 5 H208 Q216 6 211 14 L128 104 V178 L94 215 Q89 218 89 212 V106 L5 14 Q0 7 8 5Z" />
                            </svg>
                        </IconButton>
                    </BottomBar>
                </MapScreen>

                <ExpandButton aria-label="Next">
                    <svg width="156" height="134" viewBox="0 0 156 134" fill="none" stroke="#fbbc0c">
                        <circle cx="78" cy="67" r="58" strokeWidth="3" />
                        <path d="M72 36 L98 66 L72 97" strokeWidth="10" />
                    </svg>
                </ExpandButton>

                <Drawer>
                    <DrawerHeader>
                        <Logo />
                        <VersionRow>
                            <Version>v.4.10</Version>
                            <InfoButton aria-label="Info">
                                <svg width="56" height="58" viewBox="0 0 56 58" fill="#0d0d0d" stroke="#ddd">
                                    <ellipse cx="28" cy="29" rx="27" ry="28" />
                                    <circle cx="28" cy="15" r="3" />
                                    <path d="M23 22 H31 V40 Q36 41 38 43 H20 Q22 41 27 40 V25 H23Z" />
                                </svg>
                            </InfoButton>
                        </VersionRow>
                    </DrawerHeader>
                    <MenuTitle>
                        <LineIcon $size={60} viewBox="0 0 180 180" strokeWidth="5">
                            <path d="M3 82 L90 13 L178 84 M18 88 V169 H73 V126 H109 V169 H163 V93" />
                        </LineIcon>
                        <MenuLabel>Menu</MenuLabel>
                    </MenuTitle>
                    <MenuList>
                        {menuItems.map(({ label, icon }) => (
                            <li key={label}>
                                <MenuLink href="#">
                                    <LineIcon $size={90} viewBox="0 0 270 270">{icon}</LineIcon>
                                    <MenuLabel>{label}</MenuLabel>
                                </MenuLink>
                            </li>
                        ))}
                    </MenuList>
                </Drawer>
            </Main>

            <NavBar>
                <IconButton aria-label="Back">
                    <svg width="54" height="60" viewBox="0 0 54 60" fill="none" stroke="#e5e5e5" strokeWidth="6" strokeLinejoin="round">
                        <path d="M48 5 V55 L5 30Z" />
                    </svg>
                </IconButton>
                <IconButton aria-label="Home">
                    <svg width="54" height="54" viewBox="0 0 54 54" fill="none" stroke="#e5e5e5" strokeWidth="6">
                        <circle cx="27" cy="27" r="23" />
                    </svg>
                </IconButton>
                <IconButton aria-label="Recent apps">
                    <svg width="48" height="48" viewBox="0 0 48 48" fill="none" stroke="#e5e5e5" strokeWidth="6" strokeLinejoin="round">
                        <rect x="3" y="3" width="42" height="42" />
                    </svg>
                </IconButton>
            </NavBar>
        </Screen>
    );
};

export default App;
